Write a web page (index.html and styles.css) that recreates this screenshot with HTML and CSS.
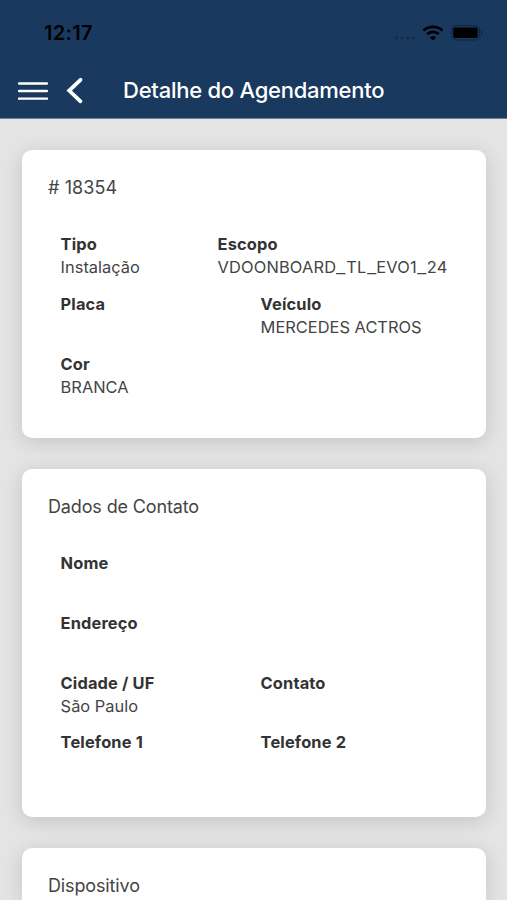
FILE: index.html
```html
<!DOCTYPE html>
<html lang="pt-BR">
<head>
    <meta charset="UTF-8">
    <meta name="viewport" content="width=device-width, initial-scale=1.0">
    <title>Detalhe do Agendamento</title>
    <link rel="stylesheet" href="styles.css">
</head>
<body>
    <header class="header">
        <div class="status-bar">
            <span class="clock">12:17</span>
            <div class="status-icons">
                <svg class="signal" width="20" height="4" viewBox="0 0 20 4">
                    <circle cx="1.5" cy="2" r="1.5"/>
                    <circle cx="7" cy="2" r="1.5"/>
                    <circle cx="12.7" cy="2" r="1.5"/>
                    <circle cx="18.4" cy="2" r="1.5"/>
                </svg>
                <svg class="wifi" width="22" height="16" viewBox="0 0 22 16">
                    <path d="M1.5 5.4C6.8.6 15.2.6 20.5 5.4M5.2 9.1c3.3-2.9 8.3-2.9 11.6 0" fill="none" stroke="#000" stroke-width="2.7"/>
                    <path d="M11 15.6L7.8 12.6c1.8-1.8 4.6-1.8 6.4 0z"/>
                </svg>
                <svg class="battery" width="32" height="16" viewBox="0 0 32 16">
                    <rect x=".6" y=".6" width="28" height="14.4" rx="4.2" fill="none" stroke="#000" stroke-opacity=".35"/>
                    <rect x="2.2" y="2.6" width="24.6" height="10.4" rx="2"/>
                    <path d="M30 5.2c2 .8 2 4.4 0 5.2z" opacity=".35"/>
                </svg>
            </div>
        </div>
        <div class="toolbar">
            <button class="menu" aria-label="Menu">
                <svg width="30" height="20" viewBox="0 0 30 20">
                    <path d="M1 2.5h28M1 10h28M1 17.6h28" stroke="#fff" stroke-width="2.4" stroke-linecap="round"/>
                </svg>
            </button>
            <button class="back" aria-label="Voltar">
                <svg width="18" height="28" viewBox="0 0 18 28">
                    <path d="M14.5 2.8L3.2 13.5l11.3 10.8" fill="none" stroke="#fff" stroke-width="3.8" stroke-linecap="round"/>
                </svg>
            </button>
            <h1 class="title">Detalhe do Agendamento</h1>
        </div>
    </header>

    <main class="content">
        <section class="card">
            <h2 class="card-title number"># 18354</h2>
            <div class="row row-wide">
                <div class="field"><b>Tipo</b><span>Instalação</span></div>
                <div class="field"><b>Escopo</b><span class="code">VDOONBOARD<i>_</i>TL<i>_</i>EVO1<i>_</i>24</span></div>
            </div>
            <div class="row">
                <div class="field"><b>Placa</b></div>
                <div class="field"><b>Veículo</b><span>MERCEDES ACTROS</span></div>
            </div>
            <div class="row">
                <div class="field"><b>Cor</b><span>BRANCA</span></div>
            </div>
        </section>

        <section class="card contact">
            <h2 class="card-title">Dados de Contato</h2>
            <div class="row">
                <div class="field"><b>Nome</b></div>
            </div>
            <div class="row">
                <div class="field"><b>Endereço</b></div>
            </div>
            <div class="row">
                <div class="field"><b>Cidade / UF</b><span>São Paulo</span></div>
                <div class="field"><b>Contato</b></div>
            </div>
            <div class="row">
                <div class="field"><b>Telefone 1</b></div>
                <div class="field"><b>Telefone 2</b></div>
            </div>
        </section>

        <section class="card device">
            <h2 class="card-title">Dispositivo</h2>
        </section>
    </main>
</body>
</html>
```

FILE: styles.css
```css
* {
    box-sizing: border-box;
}

body {
    margin: 0;
    font-family: Inter, "Liberation Sans", sans-serif;
    background: #e4e4e4;
    color: #333;
}

.header {
    height: 119px;
    background: #19395f;
    border-bottom: 1px solid #6b7f98;
}

.status-bar {
    display: flex;
    justify-content: space-between;
    align-items: center;
    height: 62px;
    padding: 4px 24px 0 44px;
    color: #000;
}

.clock {
    font-size: 20px;
    font-weight: 600;
    letter-spacing: 0.3px;
}

.status-icons {
    display: flex;
    align-items: center;
    gap: 7px;
}

.signal {
    opacity: 0.25;
    margin-top: 9px;
}

.toolbar {
    display: flex;
    align-items: center;
    height: 57px;
    padding-left: 18px;
}

button {
    display: flex;
    padding: 0;
    border: none;
    background: none;
}

.back {
    margin-left: 18px;
}

.title {
    margin: 0 0 2px 39px;
    font-size: 22px;
    font-weight: 500;
    letter-spacing: -0.25px;
    color: #fff;
}

.content {
    padding: 31px 21px 0 22px;
}

.card {
    height: 288px;
    margin-bottom: 31px;
    padding: 26px 26px 0;
    background: #fff;
    border-radius: 10px;
    box-shadow: 0 4px 20px rgba(0, 0, 0, 0.14);
}

.contact {
    height: 348px;
}

.device {
    height: 52px;
    margin-bottom: 0;
    border-radius: 10px 10px 0 0;
}

.card-title {
    margin: 0 0 33px;
    font-size: 18px;
    font-weight: 400;
    line-height: 24px;
    letter-spacing: -0.14px;
    color: #444;
}

.number {
    letter-spacing: 0.1px;
}

.device .card-title {
    margin: 0;
}

.row {
    display: grid;
    grid-template-columns: 200px 1fr;
    height: 59.8px;
    padding-left: 12.6px;
}

.row-wide {
    grid-template-columns: 157px 1fr;
}

.field {
    display: flex;
    flex-direction: column;
    font-size: 16.4px;
    line-height: 23.2px;
    white-space: nowrap;
}

.field b {
    font-weight: 650;
    letter-spacing: 0.15px;
}

.field span {
    letter-spacing: 0.02px;
    color: #444;
}

.field .code {
    letter-spacing: 0.16px;
}

.code i {
    display: inline-block;
    font-style: normal;
    transform: scaleX(1.25);
    margin: 0 1.2px;
}
```
